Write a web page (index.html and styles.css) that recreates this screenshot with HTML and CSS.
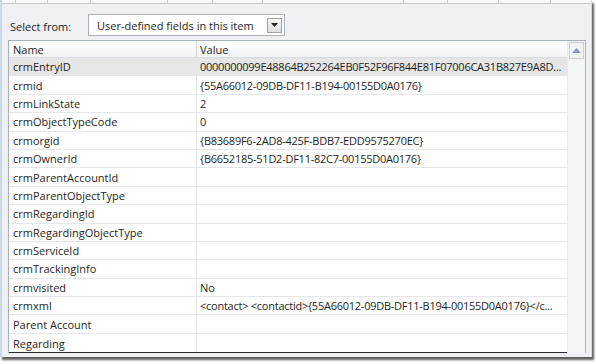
FILE: index.html
```html
<!DOCTYPE html>
<html>
<head>
<meta charset="utf-8">
<link rel="stylesheet" href="styles.css">
</head>
<body>
<div class="frame">
  <div class="tabs">
    <span class="tab t1"></span><span class="tab t2"></span><span class="tab t3"></span><span class="tab t4"></span><span class="tab t5"></span><span class="tab t6"></span><span class="tab t7"></span><span class="tab t8"></span><span class="tab t9"></span><span class="tab t10"></span>
  </div>
  <div class="select-row">
    <span class="label">Select from:</span>
    <div class="combo">
      <span class="combo-text">User-defined fields in this item</span>
      <span class="combo-btn"><svg width="7" height="4" viewBox="0 0 7 4"><path d="M0 0h7L3.5 4z" fill="#222"/></svg></span>
    </div>
  </div>
  <div class="listbox">
    <div class="list">
      <div class="row head"><div class="c1">Name</div><div class="c2">Value</div></div>
      <div class="row sel"><div class="c1">crmEntryID</div><div class="c2 val">0000000099E48864B252264EB0F52F96F844E81F07006CA31B827E9A8D...</div></div>
      <div class="row"><div class="c1">crmid</div><div class="c2 val">{55A66012-09DB-DF11-B194-00155D0A0176}</div></div>
      <div class="row"><div class="c1">crmLinkState</div><div class="c2 val">2</div></div>
      <div class="row"><div class="c1">crmObjectTypeCode</div><div class="c2 val">0</div></div>
      <div class="row"><div class="c1">crmorgid</div><div class="c2 val">{B83689F6-2AD8-425F-BDB7-EDD9575270EC}</div></div>
      <div class="row"><div class="c1">crmOwnerId</div><div class="c2 val">{B6652185-51D2-DF11-82C7-00155D0A0176}</div></div>
      <div class="row"><div class="c1">crmParentAccountId</div><div class="c2"></div></div>
      <div class="row"><div class="c1">crmParentObjectType</div><div class="c2"></div></div>
      <div class="row"><div class="c1">crmRegardingId</div><div class="c2"></div></div>
      <div class="row"><div class="c1">crmRegardingObjectType</div><div class="c2"></div></div>
      <div class="row"><div class="c1">crmServiceId</div><div class="c2"></div></div>
      <div class="row"><div class="c1">crmTrackingInfo</div><div class="c2"></div></div>
      <div class="row"><div class="c1">crmvisited</div><div class="c2">No</div></div>
      <div class="row"><div class="c1">crmxml</div><div class="c2 val">&lt;contact&gt; &lt;contactid&gt;{55A66012-09DB-DF11-B194-00155D0A0176}&lt;/c...</div></div>
      <div class="row"><div class="c1">Parent Account</div><div class="c2"></div></div>
      <div class="row last"><div class="c1">Regarding</div><div class="c2"></div></div>
    </div>
    <div class="scrollbar">
      <div class="sb-btn"><svg width="9" height="5" viewBox="0 0 9 5"><path d="M0 5L4.5 0L9 5z" fill="#8a98b4"/></svg></div>
      <div class="sb-track"></div>
    </div>
  </div>
</div>
</body>
</html>
```
FILE: styles.css
```css
html, body {
  margin: 0;
  padding: 0;
  background: #ffffff;
}
body {
  width: 596px;
  height: 364px;
  overflow: hidden;
  font-family: "Open Sans", "Noto Sans", sans-serif;
  font-size: 11px;
  color: #1e1e1e;
}
.frame {
  width: 589px;
  height: 357px;
  background: #eef0f3;
  border-left: 2px solid #c9d7e8;
  border-right: 1px solid #d4d7dc;
  box-shadow: 2px 3px 2px rgba(40, 40, 40, 0.75);
  display: flex;
  flex-direction: column;
}
.tabs {
  height: 3px;
  background: #f7f8fa;
  border-bottom: 1px solid #c3c7cd;
  display: flex;
}
.tab {
  height: 3px;
  border-right: 1px solid #c3c7cd;
}
.t1 { width: 13px; }
.t2 { width: 31px; }
.t3 { width: 42px; }
.t4 { width: 76px; }
.t5 { width: 44px; }
.t6 { width: 49px; }
.t7 { width: 140px; }
.t8 { width: 43px; }
.t9 { width: 50px; }
.t10 { width: 51px; }
.select-row {
  display: flex;
  align-items: center;
  height: 22px;
  margin-top: 10px;
  padding-left: 8px;
}
.label {
  width: 78px;
  padding-top: 2px;
  color: #1e1e1e;
}
.combo {
  width: 187px;
  height: 20px;
  border: 1px solid #aab1bb;
  background: #ffffff;
  display: flex;
  align-items: center;
  justify-content: space-between;
  padding-left: 8px;
  box-sizing: content-box;
}
.combo-text {
  color: #1e1e1e;
}
.combo-btn {
  width: 13px;
  height: 13px;
  margin-right: 2px;
  border: 1px solid #9aa2ad;
  background: linear-gradient(#f6f6f6, #dedede);
  display: flex;
  align-items: center;
  justify-content: center;
}
.listbox {
  margin: 4px 0 0 6px;
  width: 576px;
  height: 312px;
  border: 1px solid #a8b0ba;
  border-bottom: none;
  background: #ffffff;
  display: flex;
}
.list {
  flex: 1;
  display: flex;
  flex-direction: column;
  min-width: 0;
  border-bottom: 1px solid #2a2a2a;
}
.row {
  height: 18.4px;
  box-sizing: border-box;
  display: flex;
  border-bottom: 1px solid #e4e6e9;
  flex: none;
}
.row.head {
  height: 17px;
  border-bottom: 1px solid #d6d9de;
  background: linear-gradient(#ffffff, #f3f4f6);
}
.row.sel {
  background: #e6e6e6;
}
.row.last {
  border-bottom: none;
}
.c1 {
  width: 183px;
  padding-left: 4px;
  border-right: 1px solid #e4e6e9;
  display: flex;
  align-items: center;
  white-space: nowrap;
  overflow: hidden;
}
.head .c1 {
  border-right: 1px solid #d0d4da;
}
.c2 {
  flex: 1;
  padding-left: 3px;
  display: flex;
  align-items: center;
  white-space: nowrap;
  overflow: hidden;
}
.val {
  letter-spacing: -0.25px;
}
.scrollbar {
  width: 17px;
  background: #f4f5f7;
  border-left: 1px solid #e8eaed;
  display: flex;
  flex-direction: column;
}
.sb-btn {
  height: 15px;
  margin: 1px 1px 0 1px;
  border: 1px solid #c9ced5;
  background: #f0f2f4;
  display: flex;
  align-items: center;
  justify-content: center;
}
.sb-track {
  flex: 1;
}
```
